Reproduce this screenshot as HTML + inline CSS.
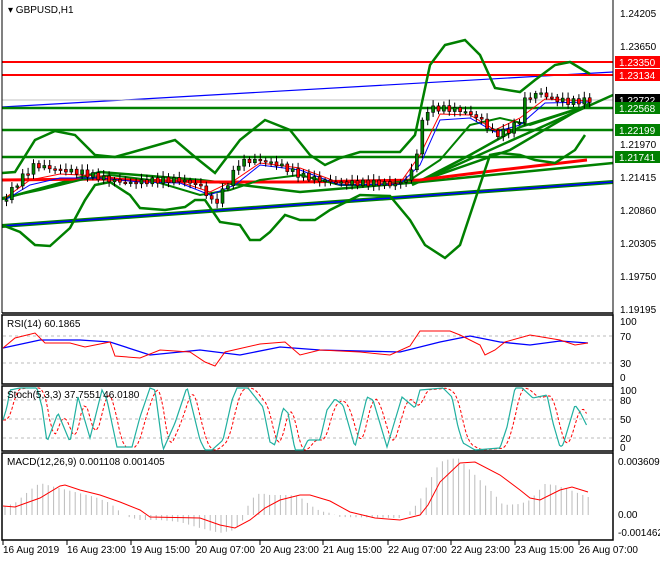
<!DOCTYPE html><html><head><meta charset="utf-8"><style>
body{margin:0;background:#fff;width:660px;height:560px;overflow:hidden;font-family:"Liberation Sans",sans-serif}
svg text{font-family:"Liberation Sans",sans-serif;font-size:10px}
</style></head><body>
<svg id="s" width="660" height="560" xmlns="http://www.w3.org/2000/svg">
<rect width="660" height="560" fill="#fff"/>
<g fill="none">
<line x1="2" y1="226" x2="613" y2="182" stroke="#008000" stroke-width="4"/>
<line x1="2" y1="226" x2="613" y2="182" stroke="#0000ff" stroke-width="1.5"/>
<line x1="2" y1="107" x2="613" y2="72" stroke="#0000ff" stroke-width="1.2"/>
<line x1="2" y1="62" x2="613" y2="62" stroke="#ff0000" stroke-width="2"/>
<line x1="2" y1="75" x2="613" y2="75" stroke="#ff0000" stroke-width="2"/>
<line x1="2" y1="100" x2="613" y2="100" stroke="#c0c0c0" stroke-width="1"/>
<line x1="2" y1="108" x2="613" y2="108" stroke="#008000" stroke-width="2.5"/>
<line x1="2" y1="130" x2="613" y2="130" stroke="#008000" stroke-width="2.5"/>
<line x1="2" y1="157" x2="613" y2="157" stroke="#008000" stroke-width="2.5"/>
<polyline stroke="#008000" stroke-width="2.5" points="2,199 100,172 200,180 300,192 420,182 613,163"/>
<polyline stroke="#008000" stroke-width="2.5" points="412,185 613,95"/>
<polyline stroke="#008000" stroke-width="2.5" points="415,183 510,150 590,103"/>
<polyline stroke="#008000" stroke-width="2.5" points="418,182 470,155 520,127 590,105"/>
<polyline stroke="#ff0000" stroke-width="3" points="2,180 100,179 210,182 300,182 420,180 500,170 587,160"/>
<polyline stroke="#008000" stroke-width="2.5" points="2,173 15,172 35,140 55,131 75,135 95,155 115,157 140,150 175,140 195,157 215,173 240,140 265,120 290,130 310,155 325,165 340,158 360,152 400,152 415,135 430,65 445,45 465,40 480,55 495,88 520,92 535,80 555,65 570,62 590,74"/>
<polyline stroke="#008000" stroke-width="2.5" points="2,225 20,232 35,245 50,246 70,228 85,200 95,185 110,182 130,195 140,208 165,210 185,207 195,200 205,200 220,222 240,225 250,240 260,240 270,232 285,215 300,220 315,220 330,210 360,195 390,196 410,220 425,245 445,258 460,245 475,200 490,155 500,153 520,155 535,160 555,163 575,150 585,135"/>
<polyline stroke="#008000" stroke-width="2" points="2,198 40,190 80,180 110,175 150,180 200,195 230,190 260,180 300,175 340,185 380,185 410,180 440,160 470,125 500,118 530,125 560,115 590,105"/>
<polyline stroke="#0000ff" stroke-width="1" points="5,200 30,185 60,178 100,178 140,182 180,183 210,195 235,185 260,165 300,170 340,185 400,184 420,165 440,120 470,118 495,132 520,125 545,103 590,102"/>
<polyline stroke="#ff0000" stroke-width="1" points="5,198 30,180 60,174 100,176 140,181 180,182 210,192 235,180 260,163 300,168 340,183 400,183 420,155 440,114 470,115 495,130 520,118 545,99 590,101"/>
</g>
<g id="candles"></g>
<line x1="2" y1="0" x2="2" y2="313" stroke="#000"/>
<line x1="613" y1="0" x2="613" y2="540" stroke="#000"/>
<line x1="2" y1="313" x2="613" y2="313" stroke="#000" stroke-width="1.5"/>
<text x="8" y="13" font-size="10">▾ GBPUSD,H1</text>
<g font-size="10">
<text x="620" y="17">1.24205</text><text x="620" y="50">1.23650</text><text x="620" y="148">1.21970</text><text x="620" y="181">1.21415</text><text x="620" y="214">1.20860</text><text x="620" y="247">1.20305</text><text x="620" y="280">1.19750</text><text x="620" y="313">1.19195</text>
<rect x="615" y="56" width="45" height="12" fill="#ff0000"/><text x="619" y="66" fill="#fff">1.23350</text>
<rect x="615" y="69" width="45" height="12" fill="#ff0000"/><text x="619" y="79" fill="#fff">1.23134</text>
<rect x="615" y="94" width="45" height="12" fill="#000"/><text x="619" y="104" fill="#fff">1.22722</text>
<rect x="615" y="102" width="45" height="12" fill="#008000"/><text x="619" y="112" fill="#fff">1.22568</text>
<rect x="615" y="124" width="45" height="12" fill="#008000"/><text x="619" y="134" fill="#fff">1.22199</text>
<rect x="615" y="151" width="45" height="12" fill="#008000"/><text x="619" y="161" fill="#fff">1.21741</text>
</g>
<rect x="2" y="315" width="611" height="69" fill="none" stroke="#000" stroke-width="1.5"/>
<g stroke="#bbb" stroke-dasharray="3,3"><line x1="3" y1="336" x2="612" y2="336"/><line x1="3" y1="363" x2="612" y2="363"/></g>
<polyline fill="none" stroke="#0000ff" stroke-width="1.3" points="3,348 40,340 80,340 110,342 150,355 200,350 240,355 280,347 320,350 400,352 440,342 470,336 500,342 530,345 560,341 588,343"/>
<polyline fill="none" stroke="#ff0000" stroke-width="1" points="3,348 15,338 35,333 45,343 70,343 85,347 110,342 115,356 140,358 160,350 190,352 205,362 215,366 225,352 260,344 285,342 300,355 320,350 360,352 390,355 410,346 420,331 450,331 460,335 480,345 485,355 495,350 505,342 530,335 560,340 575,345 588,343"/>
<text x="7" y="327">RSI(14) 60.1865</text>
<text x="620" y="325">100</text><text x="620" y="340">70</text><text x="620" y="367">30</text><text x="620" y="381">0</text>
<rect x="2" y="386" width="611" height="65" fill="none" stroke="#000" stroke-width="1.5"/>
<g stroke="#bbb" stroke-dasharray="3,3"><line x1="3" y1="400" x2="612" y2="400"/><line x1="3" y1="419" x2="612" y2="419"/><line x1="3" y1="438" x2="612" y2="438"/></g>
<polyline id="sr" fill="none" stroke="#ff0000" stroke-width="1" stroke-dasharray="3,2"/>
<polyline id="st" fill="none" stroke="#20b0a0" stroke-width="1.2"/>
<text x="7" y="398">Stoch(5,3,3) 37.7551 46.0180</text>
<text x="620" y="394">100</text><text x="620" y="404">80</text><text x="620" y="423">50</text><text x="620" y="442">20</text><text x="620" y="451">0</text>
<rect x="2" y="453" width="611" height="87" fill="none" stroke="#000" stroke-width="1.5"/>
<g id="macd"></g>
<polyline fill="none" stroke="#ff0000" stroke-width="1" points="3,506 15,507 40,498 60,486 65,485 80,490 100,495 120,502 140,510 150,517 200,518 220,525 235,528 250,520 265,508 280,500 300,495 310,495 330,501 350,512 375,518 400,520 420,515 428,505 440,482 460,463 475,462 500,475 520,490 530,498 540,500 560,490 572,487 588,492"/>
<text x="7" y="465">MACD(12,26,9) 0.001108 0.001405</text>
<text x="618" y="465">0.003609</text><text x="618" y="518">0.00</text><text x="618" y="536">-0.001462</text>
<g stroke="#000"><line x1="3" y1="540" x2="3" y2="545"/><line x1="67" y1="540" x2="67" y2="545"/><line x1="131" y1="540" x2="131" y2="545"/><line x1="196" y1="540" x2="196" y2="545"/><line x1="260" y1="540" x2="260" y2="545"/><line x1="323" y1="540" x2="323" y2="545"/><line x1="388" y1="540" x2="388" y2="545"/><line x1="451" y1="540" x2="451" y2="545"/><line x1="515" y1="540" x2="515" y2="545"/><line x1="579" y1="540" x2="579" y2="545"/></g>
<g font-size="10"><text x="3" y="553">16 Aug 2019</text><text x="67" y="553">16 Aug 23:00</text><text x="131" y="553">19 Aug 15:00</text><text x="196" y="553">20 Aug 07:00</text><text x="260" y="553">20 Aug 23:00</text><text x="323" y="553">21 Aug 15:00</text><text x="388" y="553">22 Aug 07:00</text><text x="451" y="553">22 Aug 23:00</text><text x="515" y="553">23 Aug 15:00</text><text x="579" y="553">26 Aug 07:00</text></g>
</svg>
<script>
function interp(A,x){for(var i=0;i<A.length-1;i++){if(x<=A[i+1][0]){var t=(x-A[i][0])/(A[i+1][0]-A[i][0]);return A[i][1]+t*(A[i+1][1]-A[i][1]);}}return A[A.length-1][1];}
var P=[[5,200],[20,180],[35,165],[60,170],[80,172],[110,180],[130,183],[160,180],[180,180],[200,185],[215,205],[230,180],[240,162],[260,160],[280,165],[300,175],[320,180],[340,183],[360,183],[380,183],[395,185],[410,178],[418,150],[425,110],[440,108],[460,110],[480,118],[495,135],[510,130],[520,120],[525,100],[540,92],[550,98],[570,102],[590,100]];
var h='',prev=interp(P,4);
for(var x=5;x<=589;x+=5.4){var c=interp(P,x+2)+(Math.sin(x*1.7)*3),o=prev;var hi=Math.min(o,c)-2-Math.abs(Math.sin(x))*4,lo=Math.max(o,c)+2+Math.abs(Math.cos(x*.7))*3;
h+='<line x1="'+(x+1.5)+'" y1="'+hi+'" x2="'+(x+1.5)+'" y2="'+lo+'" stroke="#000"/>';
var t=Math.min(o,c),b=Math.max(Math.abs(o-c),1.5);h+='<rect x="'+x+'" y="'+t+'" width="3" height="'+b+'" fill="'+(c<o?'#008000':'#ff0000')+'" stroke="#000" stroke-width="0.6"/>';prev=c;}
document.getElementById('candles').innerHTML=h;
var S=[[3,420],[7,407],[10,390],[20,388],[37,388],[42,407],[47,442],[58,413],[70,442],[78,397],[90,438],[102,390],[107,400],[117,447],[132,447],[140,417],[150,388],[155,390],[163,450],[175,423],[187,387],[200,440],[205,450],[212,450],[223,440],[232,400],[237,388],[248,388],[263,407],[270,442],[275,445],[283,408],[288,413],[295,450],[303,450],[308,440],[320,440],[327,410],[335,399],[343,405],[355,447],[367,397],[373,400],[387,447],[402,397],[415,408],[420,390],[443,388],[452,397],[458,427],[463,443],[475,450],[500,448],[507,427],[515,388],[522,388],[533,398],[547,395],[553,423],[560,447],[563,445],[575,405],[580,412],[587,426]];
var st='';for(var x=3;x<=587;x+=1.5){st+=x+','+interp(S,x)+' ';}
document.getElementById('st').setAttribute('points',st);
var sr='';for(var x=3;x<=587;x+=1.5){var v=(interp(S,Math.max(3,x-3))+interp(S,Math.max(3,x-6))+interp(S,Math.max(3,x-9)))/3;sr+=x+','+v+' ';}
document.getElementById('sr').setAttribute('points',sr);
var M=[[3,507],[15,503],[30,490],[40,483],[55,487],[75,492],[95,497],[110,503],[118,510],[125,516],[140,520],[160,520],[180,522],[200,528],[220,533],[235,530],[243,520],[250,500],[260,493],[270,495],[290,495],[300,497],[310,505],[320,511],[330,513],[340,517],[400,518],[412,510],[420,500],[430,480],[440,462],[450,459],[458,458],[470,470],[483,483],[495,495],[503,505],[520,504],[530,500],[545,484],[555,485],[570,490],[588,497]];
var m='';for(var x=5;x<=589;x+=5.4){var y=interp(M,x);m+='<line x1="'+x+'" y1="515" x2="'+x+'" y2="'+y+'" stroke="#bbb"/>';}
document.getElementById('macd').innerHTML=m;
</script>
</body></html>
